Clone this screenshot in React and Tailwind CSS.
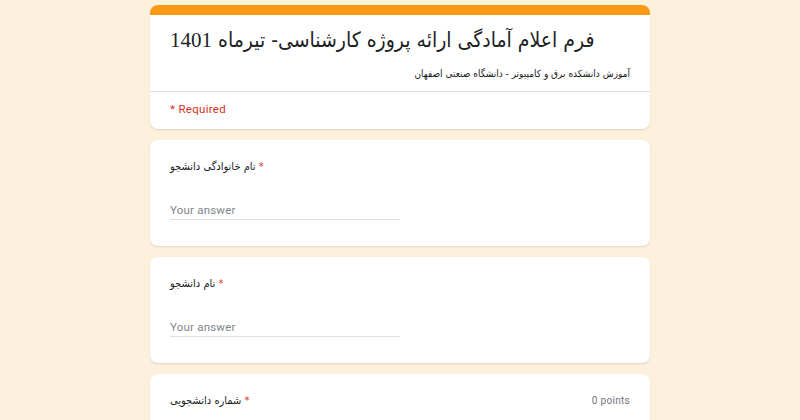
export default function App() {
  const arab = { fontFamily: '"DejaVu Sans Condensed", "DejaVu Sans", sans-serif' };
  return (
    <div className="w-full bg-[#fdf0dc] flex flex-col items-center pt-[5px] gap-[11px] overflow-hidden h-[420px]" style={{ fontFamily: 'Roboto, "Liberation Sans", sans-serif' }}>
      <div className="w-[500px] rounded-lg bg-white overflow-hidden shadow-[0_1px_2px_rgba(0,0,0,0.12)] shrink-0">
        <div className="h-[10px] bg-[#fb9b14]" />
        <div className="px-5 pt-[10px] pb-[9px]">
          <div className="text-[21px] leading-[30px] text-[#202124] whitespace-nowrap" style={arab}>
            فرم اعلام آمادگی ارائه پروژه کارشناسی- تیرماه <span style={{ fontFamily: '"Liberation Serif", serif' }}>1401</span>
          </div>
          <div className="mt-[11px] text-[10px] leading-[16px] text-[#202124] text-right whitespace-nowrap" dir="rtl" style={arab}>آموزش دانشکده برق و کامپیوتر - دانشگاه صنعتی اصفهان</div>
        </div>
        <div className="border-t border-[#dadce0]" />
        <div className="px-5 pt-[9px] pb-[12px] text-[11.5px] leading-[16px] tracking-[0.3px] text-[#d93025]">* Required</div>
      </div>

      {["نام خانوادگی دانشجو", "نام دانشجو"].map((label) => (
        <div key={label} className="w-[500px] rounded-lg bg-white shadow-[0_1px_2px_rgba(0,0,0,0.12)] px-5 pt-[17px] pb-[26px] shrink-0">
          <div className="text-[11px] leading-[20px] text-[#202124] whitespace-nowrap" style={arab}>
            {label} <span className="text-[#d93025]">*</span>
          </div>
          <div className="mt-[24px] w-[230px] border-b border-[#e0e0e0] text-[11.5px] leading-[18px] tracking-[0.2px] text-[#80868b]">Your answer</div>
        </div>
      ))}

      <div className="w-[500px] rounded-lg bg-white shadow-[0_1px_2px_rgba(0,0,0,0.12)] px-5 pt-[17px] pb-[25px] shrink-0">
        <div className="flex items-center justify-between">
          <div className="text-[11px] leading-[20px] text-[#202124] whitespace-nowrap" style={arab}>
            شماره دانشجویی <span className="text-[#d93025]">*</span>
          </div>
          <div className="text-[10px] leading-[20px] tracking-[0.3px] text-[#70757a]">0 points</div>
        </div>
        <div className="h-[40px]" />
      </div>
    </div>
  );
}
